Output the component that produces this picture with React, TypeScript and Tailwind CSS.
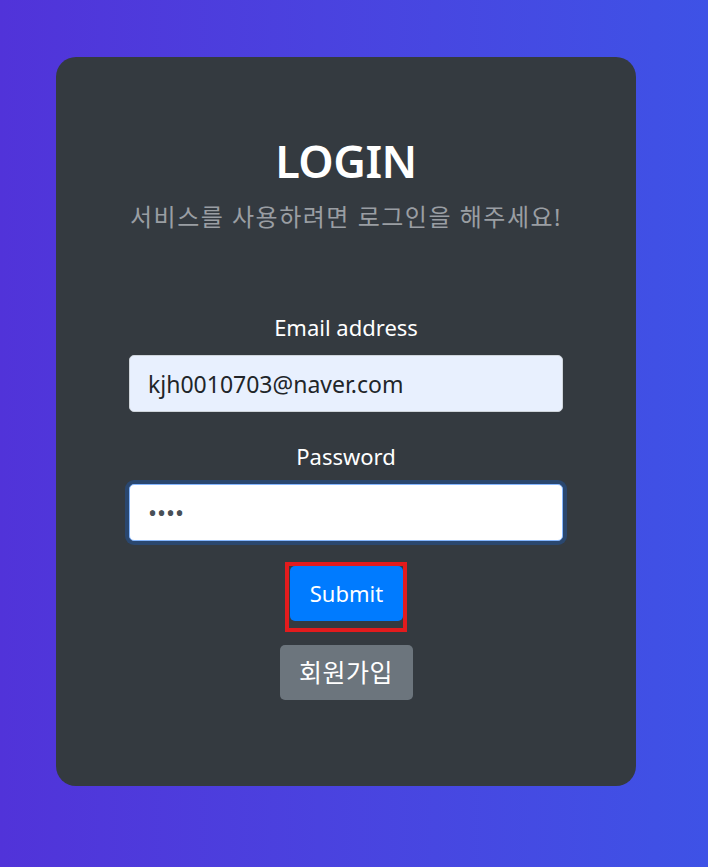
import React from 'react';

const font = { fontFamily: '"Noto Sans", "Noto Sans CJK KR", sans-serif' };

export default function App() {
  return (
    <div
      className="min-h-screen w-full bg-linear-to-r from-[#5133d9] to-[#3e52e6] pt-[57px] pb-[81px]"
      style={font}
    >
      <div className="ml-[56px] flex h-[729px] w-[580px] flex-col items-center rounded-[20px] bg-[#343a40] pt-[75px]">
        {/* heading */}
        <h1 className="text-[45px] font-semibold leading-[58px] tracking-[-0.5px] text-white">LOGIN</h1>
        <p className="mt-[11px] text-[24px] leading-[31px] tracking-[1.5px] text-[#9a9ea3]">
          서비스를 사용하려면 로그인을 해주세요!
        </p>

        {/* form */}
        <form className="mt-[80px] flex w-[434px] flex-col items-center">
          <label className="text-[22px] leading-[30px] text-white">Email address</label>
          <input
            type="email"
            readOnly
            value="kjh0010703@naver.com"
            className="mt-[13px] h-[57px] w-full rounded-[5px] border border-[#ced4da] bg-[#e8f0fe] px-[18px] text-[23px] text-[#212529] outline-none"
          />

          <label className="mt-[29px] text-[22px] leading-[30px] text-white">Password</label>
          <input
            type="password"
            readOnly
            value="1234"
            className="mt-[13px] h-[57px] w-full rounded-[5px] border border-[#86b7fe] bg-white px-[18px] text-[24px] text-[#495057] outline-none ring-4 ring-[#0d6efd]/25"
          />

          <div className="mt-[21px] flex border-4 border-[#e31b1d] pb-[7px] pl-px">
            <button
              type="button"
              className="h-[55px] w-[113px] rounded-[5px] bg-[#007bff] text-[22px] text-white"
            >
              Submit
            </button>
          </div>

          <button
            type="button"
            className="mt-[13px] h-[55px] w-[133px] rounded-[5px] bg-[#6c757d] text-[25px] tracking-[0.5px] text-white"
          >
            회원가입
          </button>
        </form>
      </div>
    </div>
  );
}
